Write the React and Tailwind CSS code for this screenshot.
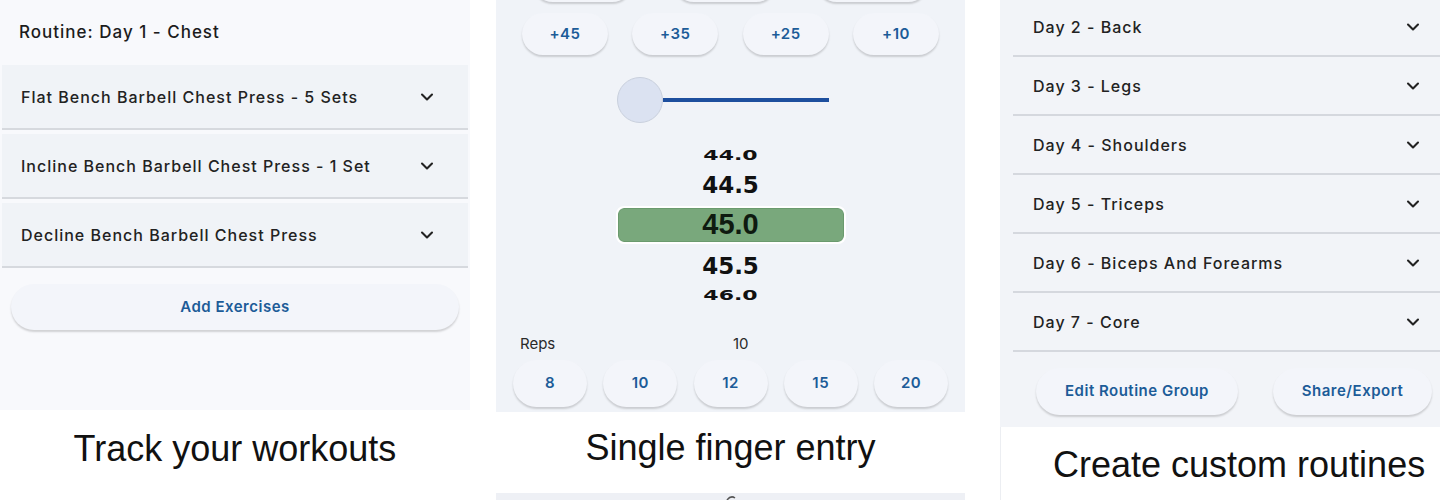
import { ChevronDown } from "lucide-react";

const UI_FONT = "font-['Inter','Noto_Sans',sans-serif]";
const CAPTION_FONT = "font-['Liberation_Sans','Arial',sans-serif]";

const exercises = [
  "Flat Bench Barbell Chest Press - 5 Sets",
  "Incline Bench Barbell Chest Press - 1 Set",
  "Decline Bench Barbell Chest Press",
];

const routines = [
  "Day 2 - Back",
  "Day 3 - Legs",
  "Day 4 - Shoulders",
  "Day 5 - Triceps",
  "Day 6 - Biceps And Forearms",
  "Day 7 - Core",
];

function PillButton({ children, className = "" }) {
  return (
    <div
      className={`flex items-center justify-center rounded-full bg-[#f3f5fa] shadow-[0_2px_2px_rgba(0,0,0,0.16)] text-[15px] font-semibold tracking-[0.5px] text-[#1c5c98] ${className}`}
    >
      {children}
    </div>
  );
}

function Caption({ children, className = "" }) {
  return (
    <div className={`${CAPTION_FONT} text-[36px] leading-[36px] text-[#111] ${className}`}>
      {children}
    </div>
  );
}

function Chevron() {
  return <ChevronDown size={20} strokeWidth={2.5} color="#222" />;
}

function TrackPanel() {
  return (
    <div className="w-[470px] shrink-0 flex flex-col">
      <div className="h-[410px] bg-[#f8f9fc] flex flex-col">
        <div className="h-[65px] flex items-center pl-[19px] text-[17px] font-medium tracking-[1px] text-[#1c1c1c]">
          Routine: Day 1 - Chest
        </div>
        <div className="px-[2px] flex flex-col gap-[4px]">
          {exercises.map((name) => (
            <div
              key={name}
              className="h-[65px] bg-[#f0f3f7] border-b-2 border-[#d6d9de] flex items-center justify-between pl-[19px] pr-[31px] text-[16px] font-medium tracking-[1px] text-[#222]"
            >
              <span>{name}</span>
              <Chevron />
            </div>
          ))}
        </div>
        <PillButton className="mt-[16px] mx-[11px] h-[46px]">Add Exercises</PillButton>
      </div>
      <Caption className="pt-[21px] text-center">Track your workouts</Caption>
    </div>
  );
}

function EntryPanel() {
  return (
    <div className="w-[469px] shrink-0 ml-[26px] flex flex-col">
      <div className="h-[412px] bg-[#f0f3f8] overflow-hidden flex flex-col">
        {/* row scrolled mostly out of view */}
        <div className="-mt-[40px] h-[42px] shrink-0 flex justify-between px-[36px]">
          <PillButton className="w-[101px]" />
          <PillButton className="w-[104px]" />
          <PillButton className="w-[113px]" />
        </div>
        <div className="mt-[11px] h-[42px] shrink-0 flex justify-between px-[26px]">
          {["+45", "+35", "+25", "+10"].map((v) => (
            <PillButton key={v} className="w-[86px]">
              {v}
            </PillButton>
          ))}
        </div>

        <div className="mt-[22px] h-[46px] shrink-0 flex items-center pl-[121px]">
          <div className="w-[46px] h-[46px] rounded-full bg-[#dbe2f1] border border-[#c9d0dd]" />
          <div className="w-[166px] h-[4px] bg-[#1d4f9e]" />
        </div>

        <div className="mt-[17px] flex flex-col items-center font-['DejaVu_Sans',sans-serif] font-bold text-[#111]">
          <div className="h-[30px] flex items-center text-[22px] scale-y-[0.65]">44.0</div>
          <div className="h-[30px] flex items-center text-[23px]">44.5</div>
          <div className="mt-[8px] w-[226px] h-[34px] rounded-[6px] bg-[#79a87c] border border-[#6a9a6e] outline-2 outline-white flex items-center justify-center font-['Liberation_Sans',sans-serif] text-[29px] text-[#0f1a10]">
            45.0
          </div>
          <div className="mt-[9px] h-[30px] flex items-center text-[23px]">45.5</div>
          <div className="h-[28px] flex items-center text-[22px] scale-y-[0.65]">46.0</div>
        </div>

        <div className="mt-[25px] h-[20px] flex items-center pl-[24px] text-[15px] text-[#2a2a2a]">
          <span className="w-[213px]">Reps</span>
          <span>10</span>
        </div>
        <div className="mt-[6px] h-[47px] shrink-0 flex justify-between px-[17px]">
          {["8", "10", "12", "15", "20"].map((v) => (
            <PillButton key={v} className="w-[74px]">
              {v}
            </PillButton>
          ))}
        </div>
      </div>
      <Caption className="pt-[18px] text-center">Single finger entry</Caption>
      <div className="mt-[27px] h-[7px] bg-[#eef0f5] flex justify-center">
        <svg width="12" height="7" viewBox="0 0 12 7">
          <path d="M2 7 Q6 2 10 5" stroke="#555" strokeWidth="1.5" fill="none" />
        </svg>
      </div>
    </div>
  );
}

function RoutinesPanel() {
  return (
    <div className="w-[440px] shrink-0 ml-[35px] flex flex-col">
      <div className="h-[427px] bg-[#f2f4f8] overflow-hidden flex flex-col">
        <div className="-mt-[2px] pl-[13px] flex flex-col">
          {routines.map((name) => (
            <div
              key={name}
              className="h-[59px] shrink-0 border-b-2 border-[#d5d8de] flex items-center justify-between pl-[20px] pr-[17px] text-[16px] font-medium tracking-[1px] text-[#222]"
            >
              <span>{name}</span>
              <Chevron />
            </div>
          ))}
        </div>
        <div className="mt-[16px] h-[47px] flex pl-[36px] gap-[35px]">
          <PillButton className="w-[202px]">Edit Routine Group</PillButton>
          <PillButton className="w-[159px]">Share/Export</PillButton>
        </div>
      </div>
      <div className="flex-1 border-l border-[#eceef2]">
        <Caption className="pt-[20px] pl-[52px]">Create custom routines</Caption>
      </div>
    </div>
  );
}

export default function App() {
  return (
    <div className={`${UI_FONT} w-[1440px] h-[500px] overflow-hidden bg-white flex`}>
      <TrackPanel />
      <EntryPanel />
      <RoutinesPanel />
    </div>
  );
}
